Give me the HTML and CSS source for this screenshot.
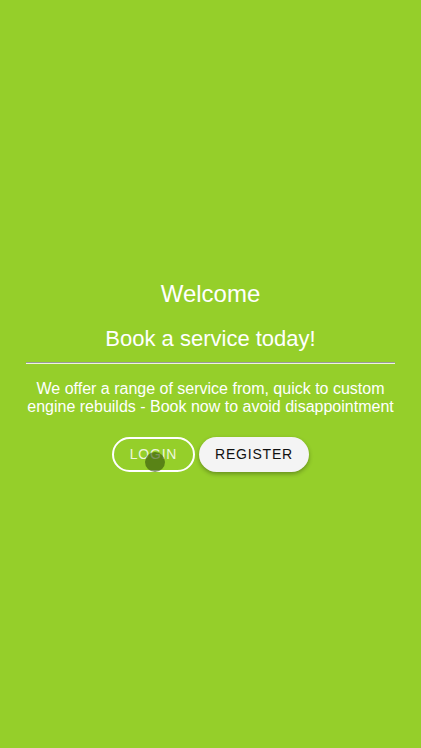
FILE: index.html
```html
<!DOCTYPE html>
<html>
<head>
<meta charset="utf-8">
<link rel="stylesheet" href="styles.css">
</head>
<body>
<main class="page">
  <section class="hero">
    <h1 class="title">Welcome</h1>
    <h2 class="subtitle">Book a service today!</h2>
    <hr class="rule">
    <p class="lead">We offer a range of service from, quick to custom engine rebuilds - Book now to avoid disappointment</p>
    <div class="actions">
      <button class="btn btn-outline">LOGIN<span class="ripple"></span></button>
      <button class="btn btn-solid">REGISTER</button>
    </div>
  </section>
</main>
</body>
</html>
```
FILE: styles.css
```css
html, body {
  margin: 0;
  padding: 0;
  height: 100%;
}
body {
  background: #95cf2a;
  font-family: "Liberation Sans", Arial, sans-serif;
  color: #fff;
}
.page {
  min-height: 100vh;
  display: flex;
  align-items: center;
  justify-content: center;
  padding: 3px 26px 0;
  box-sizing: border-box;
}
.hero {
  width: 100%;
  text-align: center;
}
.title {
  font-size: 24px;
  font-weight: normal;
  margin: 0 0 18px;
  line-height: 28px;
}
.subtitle {
  font-size: 22px;
  font-weight: normal;
  margin: 0 0 10px;
  line-height: 26px;
}
.rule {
  margin: 0 0 16px;
  border: 0;
  border-top: 1px solid #9a9a9a;
  border-bottom: 1px solid #eef5e0;
  height: 0;
}
.lead {
  font-size: 16px;
  line-height: 18px;
  margin: 0 0 21px;
}
.actions {
  display: flex;
  justify-content: center;
  gap: 4px;
}
.btn {
  position: relative;
  height: 35px;
  border-radius: 18px;
  font-family: "Liberation Sans", Arial, sans-serif;
  font-size: 14px;
  letter-spacing: 0.8px;
  cursor: pointer;
  padding: 0;
}
.btn-outline {
  width: 83px;
  background: transparent;
  border: 2px solid #fff;
  color: rgba(255,255,255,0.85);
}
.btn-solid {
  width: 110px;
  background: #f4f4f4;
  border: 0;
  color: #111;
  box-shadow: 0 2px 4px rgba(0,0,0,0.3);
}
.ripple {
  position: absolute;
  left: 31px;
  top: 13px;
  width: 20px;
  height: 20px;
  border-radius: 50%;
  background: rgba(50, 80, 10, 0.6);
}
```
